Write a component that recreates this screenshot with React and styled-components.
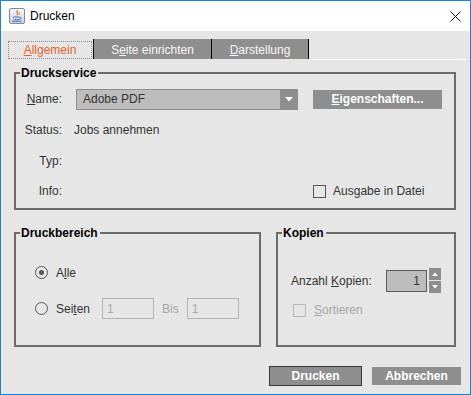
import styled, { createGlobalStyle } from 'styled-components';

const GlobalStyle = createGlobalStyle`
  html, body {
    margin: 0;
    padding: 0;
    background: #ffffff;
  }
  body {
    font-family: "Liberation Sans", Arial, sans-serif;
    font-size: 12px;
  }
  * {
    box-sizing: border-box;
  }
`;

const JavaIcon = () => (
  <svg width='16' height='16' viewBox='0 0 16 16'>
    <defs>
      <linearGradient id='jbg' x1='0' y1='0' x2='0' y2='1'>
        <stop offset='0' stopColor='#f6f8fb' />
        <stop offset='1' stopColor='#c5d2e2' />
      </linearGradient>
    </defs>
    <rect x='0.5' y='0.5' width='15' height='15' rx='1.5' fill='url(#jbg)' stroke='#7b8ba3' />
    <path d='M8.5 2.2c-2.2 1.8 1.6 2.8-0.6 4.8' stroke='#e8711f' strokeWidth='1.3' fill='none' />
    <path d='M10.3 4c-1.1 1 0.8 1.6-0.3 2.8' stroke='#e8711f' strokeWidth='1' fill='none' />
    <path d='M4 9h6.5' stroke='#4d6fa8' strokeWidth='1' />
    <path d='M10.5 9.2c2 0 2 2-0.4 2.2' stroke='#4d6fa8' strokeWidth='0.9' fill='none' />
    <path d='M4.5 11c1.2 1 4.8 1 6 0' stroke='#4d6fa8' strokeWidth='1' fill='none' />
    <path d='M3 13.3h9.5' stroke='#4d6fa8' strokeWidth='1' />
  </svg>
);

const CloseIcon = () => (
  <svg width='11' height='11' viewBox='0 0 11 11'>
    <path d='M0.5 0.5L10.5 10.5M10.5 0.5L0.5 10.5' stroke='#111' strokeWidth='1' />
  </svg>
);

const App = () => {
  return (
    <>
      <GlobalStyle />
      <Window>
        <TitleBar>
          <JavaIcon />
          <Title>Drucken</Title>
          <CloseBox>
            <CloseIcon />
          </CloseBox>
        </TitleBar>

        <Body>
          <TabStrip>
            <Tab $w={87} $selected>
              <TabLabel $selected>
                <U>A</U>llgemein
              </TabLabel>
            </Tab>
            <Tab $w={118}>
              <TabLabel>
                S<U>e</U>ite einrichten
              </TabLabel>
            </Tab>
            <Tab $w={97}>
              <TabLabel>
                <U>D</U>arstellung
              </TabLabel>
            </Tab>
            <TabFiller />
          </TabStrip>

          <TabPanel>
            <Group $top={6}>
              <Legend>Druckservice</Legend>
              <ServiceGrid>
                <FieldLabel>
                  <U>N</U>ame:
                </FieldLabel>
                <Combo>
                  <ComboText>Adobe PDF</ComboText>
                  <ComboArrow>
                    <svg width='8' height='5' viewBox='0 0 8 5'>
                      <path d='M0 0h8L4 4.5z' fill='#fff' />
                    </svg>
                  </ComboArrow>
                </Combo>
                <GrayButton $w={129} $h={19}>
                  <U>E</U>igenschaften...
                </GrayButton>

                <FieldLabel>Status:</FieldLabel>
                <Value>Jobs annehmen</Value>
                <span />

                <FieldLabel>Typ:</FieldLabel>
                <Value />
                <span />

                <FieldLabel>Info:</FieldLabel>
                <Value />
                <CheckRow>
                  <CheckBox />
                  <span>
                    Aus<U>g</U>abe in Datei
                  </span>
                </CheckRow>
              </ServiceGrid>
            </Group>

            <BottomRow>
              <Group $w={247}>
                <Legend>Druckbereich</Legend>
                <RangeBody>
                  <RadioRow>
                    <Radio $checked />
                    <span>
                      A<U>l</U>le
                    </span>
                  </RadioRow>
                  <RadioRow>
                    <Radio />
                    <RadioText>
                      Sei<U>t</U>en
                    </RadioText>
                    <PageInput>1</PageInput>
                    <DimText>Bis</DimText>
                    <PageInput>1</PageInput>
                  </RadioRow>
                </RangeBody>
              </Group>

              <Group $grow>
                <Legend>Kopien</Legend>
                <CopiesBody>
                  <CopiesRow>
                    <CopiesLabel>
                      Anzahl <U>K</U>opien:
                    </CopiesLabel>
                    <SpinField>1</SpinField>
                    <SpinButtons>
                      <SpinButton>
                        <svg width='6' height='4' viewBox='0 0 6 4'>
                          <path d='M0 4h6L3 0.5z' fill='#fff' />
                        </svg>
                      </SpinButton>
                      <SpinButton>
                        <svg width='6' height='4' viewBox='0 0 6 4'>
                          <path d='M0 0h6L3 3.5z' fill='#fff' />
                        </svg>
                      </SpinButton>
                    </SpinButtons>
                  </CopiesRow>
                  <SortRow $disabled>
                    <CheckBox $disabled />
                    <span>
                      <U>S</U>ortieren
                    </span>
                  </SortRow>
                </CopiesBody>
              </Group>
            </BottomRow>
          </TabPanel>

          <ButtonBar>
            <GrayButton $w={93} $h={20} $default>
              Drucken
            </GrayButton>
            <GrayButton $w={91} $h={20} $flat>
              Abbrechen
            </GrayButton>
          </ButtonBar>
        </Body>
      </Window>
    </>
  );
};

const Window = styled.div`
  width: 471px;
  height: 395px;
  border: 1px solid #1883d7;
  background: #e6e6e6;
  display: flex;
  flex-direction: column;
  color: #333;
`;

const TitleBar = styled.div`
  height: 30px;
  background: #ffffff;
  display: flex;
  align-items: center;
  padding: 0 9px 0 8px;
  gap: 5px;
`;

const Title = styled.span`
  color: #000;
  font-size: 12px;
`;

const CloseBox = styled.span`
  margin-left: auto;
  display: flex;
`;

const Body = styled.div`
  flex: 1;
  display: flex;
  flex-direction: column;
  padding: 8px 4px 0 6px;
`;

const U = styled.u`
  text-underline-offset: 1px;
`;

const TabStrip = styled.div`
  display: flex;
  height: 21px;
`;

const Tab = styled.div`
  width: ${({ $w }) => $w}px;
  height: 20px;
  display: flex;
  padding: 2px 1px 0 1px;
  background: ${({ $selected }) => ($selected ? '#e6e6e6' : '#8e8e8e')};
  color: ${({ $selected }) => ($selected ? '#e4622a' : '#f7f7f7')};
  border-right: 1px solid #000;
`;

const TabLabel = styled.span`
  flex: 1;
  display: flex;
  align-items: center;
  justify-content: center;
  border: 1px dotted ${({ $selected }) => ($selected ? '#8c8c8c' : 'transparent')};
  padding-bottom: 1px;
`;

const TabFiller = styled.div`
  flex: 1;
  border-bottom: 1px solid #ffffff;
`;

const TabPanel = styled.div`
  display: flex;
  flex-direction: column;
  padding: 0 10px 0 7px;
`;

const Group = styled.fieldset`
  margin: ${({ $top }) => $top || 0}px 0 0 0;
  padding: 0;
  min-width: 0;
  border: 2px solid #6b6b6b;
  width: ${({ $w }) => ($w ? `${$w}px` : 'auto')};
  flex: ${({ $grow }) => ($grow ? 1 : 'none')};
`;

const Legend = styled.legend`
  margin-left: 4px;
  padding: 0 2px 0 1px;
  font-weight: bold;
  color: #000;
  line-height: 14px;
`;

const ServiceGrid = styled.div`
  display: grid;
  grid-template-columns: 58px 239px 1fr;
  grid-template-rows: 30px 31px 31px 30px;
  align-items: center;
  padding: 4px 0 2px 0;
`;

const FieldLabel = styled.span`
  text-align: right;
  padding-right: 12px;
`;

const Value = styled.span`
  color: #333;
`;

const Combo = styled.div`
  margin-left: 2px;
  width: 222px;
  height: 21px;
  display: flex;
  border: 1px solid #8e8e8e;
  background: #bdbdbd;
`;

const ComboText = styled.span`
  flex: 1;
  display: flex;
  align-items: center;
  padding-left: 6px;
  color: #333;
`;

const ComboArrow = styled.span`
  width: 17px;
  background: #8e8e8e;
  display: flex;
  align-items: center;
  justify-content: center;
`;

const GrayButton = styled.div`
  width: ${({ $w }) => $w}px;
  height: ${({ $h }) => $h}px;
  display: flex;
  align-items: center;
  justify-content: center;
  background: #8e8e8e;
  color: #ffffff;
  font-weight: bold;
  border: 1px solid
    ${({ $default, $flat }) => ($default ? '#3a3a3a' : $flat ? '#e6e6e6' : '#8e8e8e')};
`;

const CheckRow = styled.label`
  display: flex;
  align-items: center;
  gap: 7px;
  color: ${({ $disabled }) => ($disabled ? '#a4a4a4' : '#333')};
`;

const CheckBox = styled.span`
  width: 13px;
  height: 13px;
  border: 1px solid ${({ $disabled }) => ($disabled ? '#b5b5b5' : '#555')};
`;

const BottomRow = styled.div`
  display: flex;
  gap: 15px;
  margin-top: 16px;
`;

const RangeBody = styled.div`
  display: flex;
  flex-direction: column;
  gap: 15px;
  padding: 22px 0 25px 19px;
`;

const RadioRow = styled.label`
  display: flex;
  align-items: center;
  height: 21px;
  gap: 8px;
`;

const Radio = styled.span`
  width: 13px;
  height: 13px;
  border-radius: 50%;
  border: 1px solid #555;
  display: flex;
  align-items: center;
  justify-content: center;

  &::after {
    content: '';
    width: 5px;
    height: 5px;
    border-radius: 50%;
    background: ${({ $checked }) => ($checked ? '#555' : 'transparent')};
  }
`;

const RadioText = styled.span`
  margin-right: 4px;
`;

const PageInput = styled.span`
  width: 52px;
  height: 21px;
  border: 1px solid #b4b4b4;
  color: #a8a8a8;
  display: flex;
  align-items: center;
  padding-left: 4px;
`;

const DimText = styled.span`
  color: #a4a4a4;
`;

const CopiesBody = styled.div`
  display: flex;
  flex-direction: column;
  gap: 10px;
  padding: 28px 0 28px 13px;
`;

const CopiesRow = styled.div`
  display: flex;
  align-items: center;
  height: 25px;
`;

const CopiesLabel = styled.span`
  width: 95px;
`;

const SpinField = styled.span`
  width: 41px;
  height: 22px;
  border: 1px solid #5a5a5a;
  background: #bdbdbd;
  display: flex;
  align-items: center;
  justify-content: flex-end;
  padding-right: 6px;
  color: #333;
`;

const SpinButtons = styled.div`
  display: flex;
  flex-direction: column;
  gap: 1px;
  margin-left: 2px;
`;

const SpinButton = styled.span`
  width: 12px;
  height: 12px;
  background: #8e8e8e;
  display: flex;
  align-items: center;
  justify-content: center;
`;

const SortRow = styled(CheckRow)`
  padding-left: 2px;
  gap: 8px;
`;

const ButtonBar = styled.div`
  display: flex;
  justify-content: flex-end;
  gap: 9px;
  margin-top: 19px;
  padding-right: 4px;
`;

export default App;
